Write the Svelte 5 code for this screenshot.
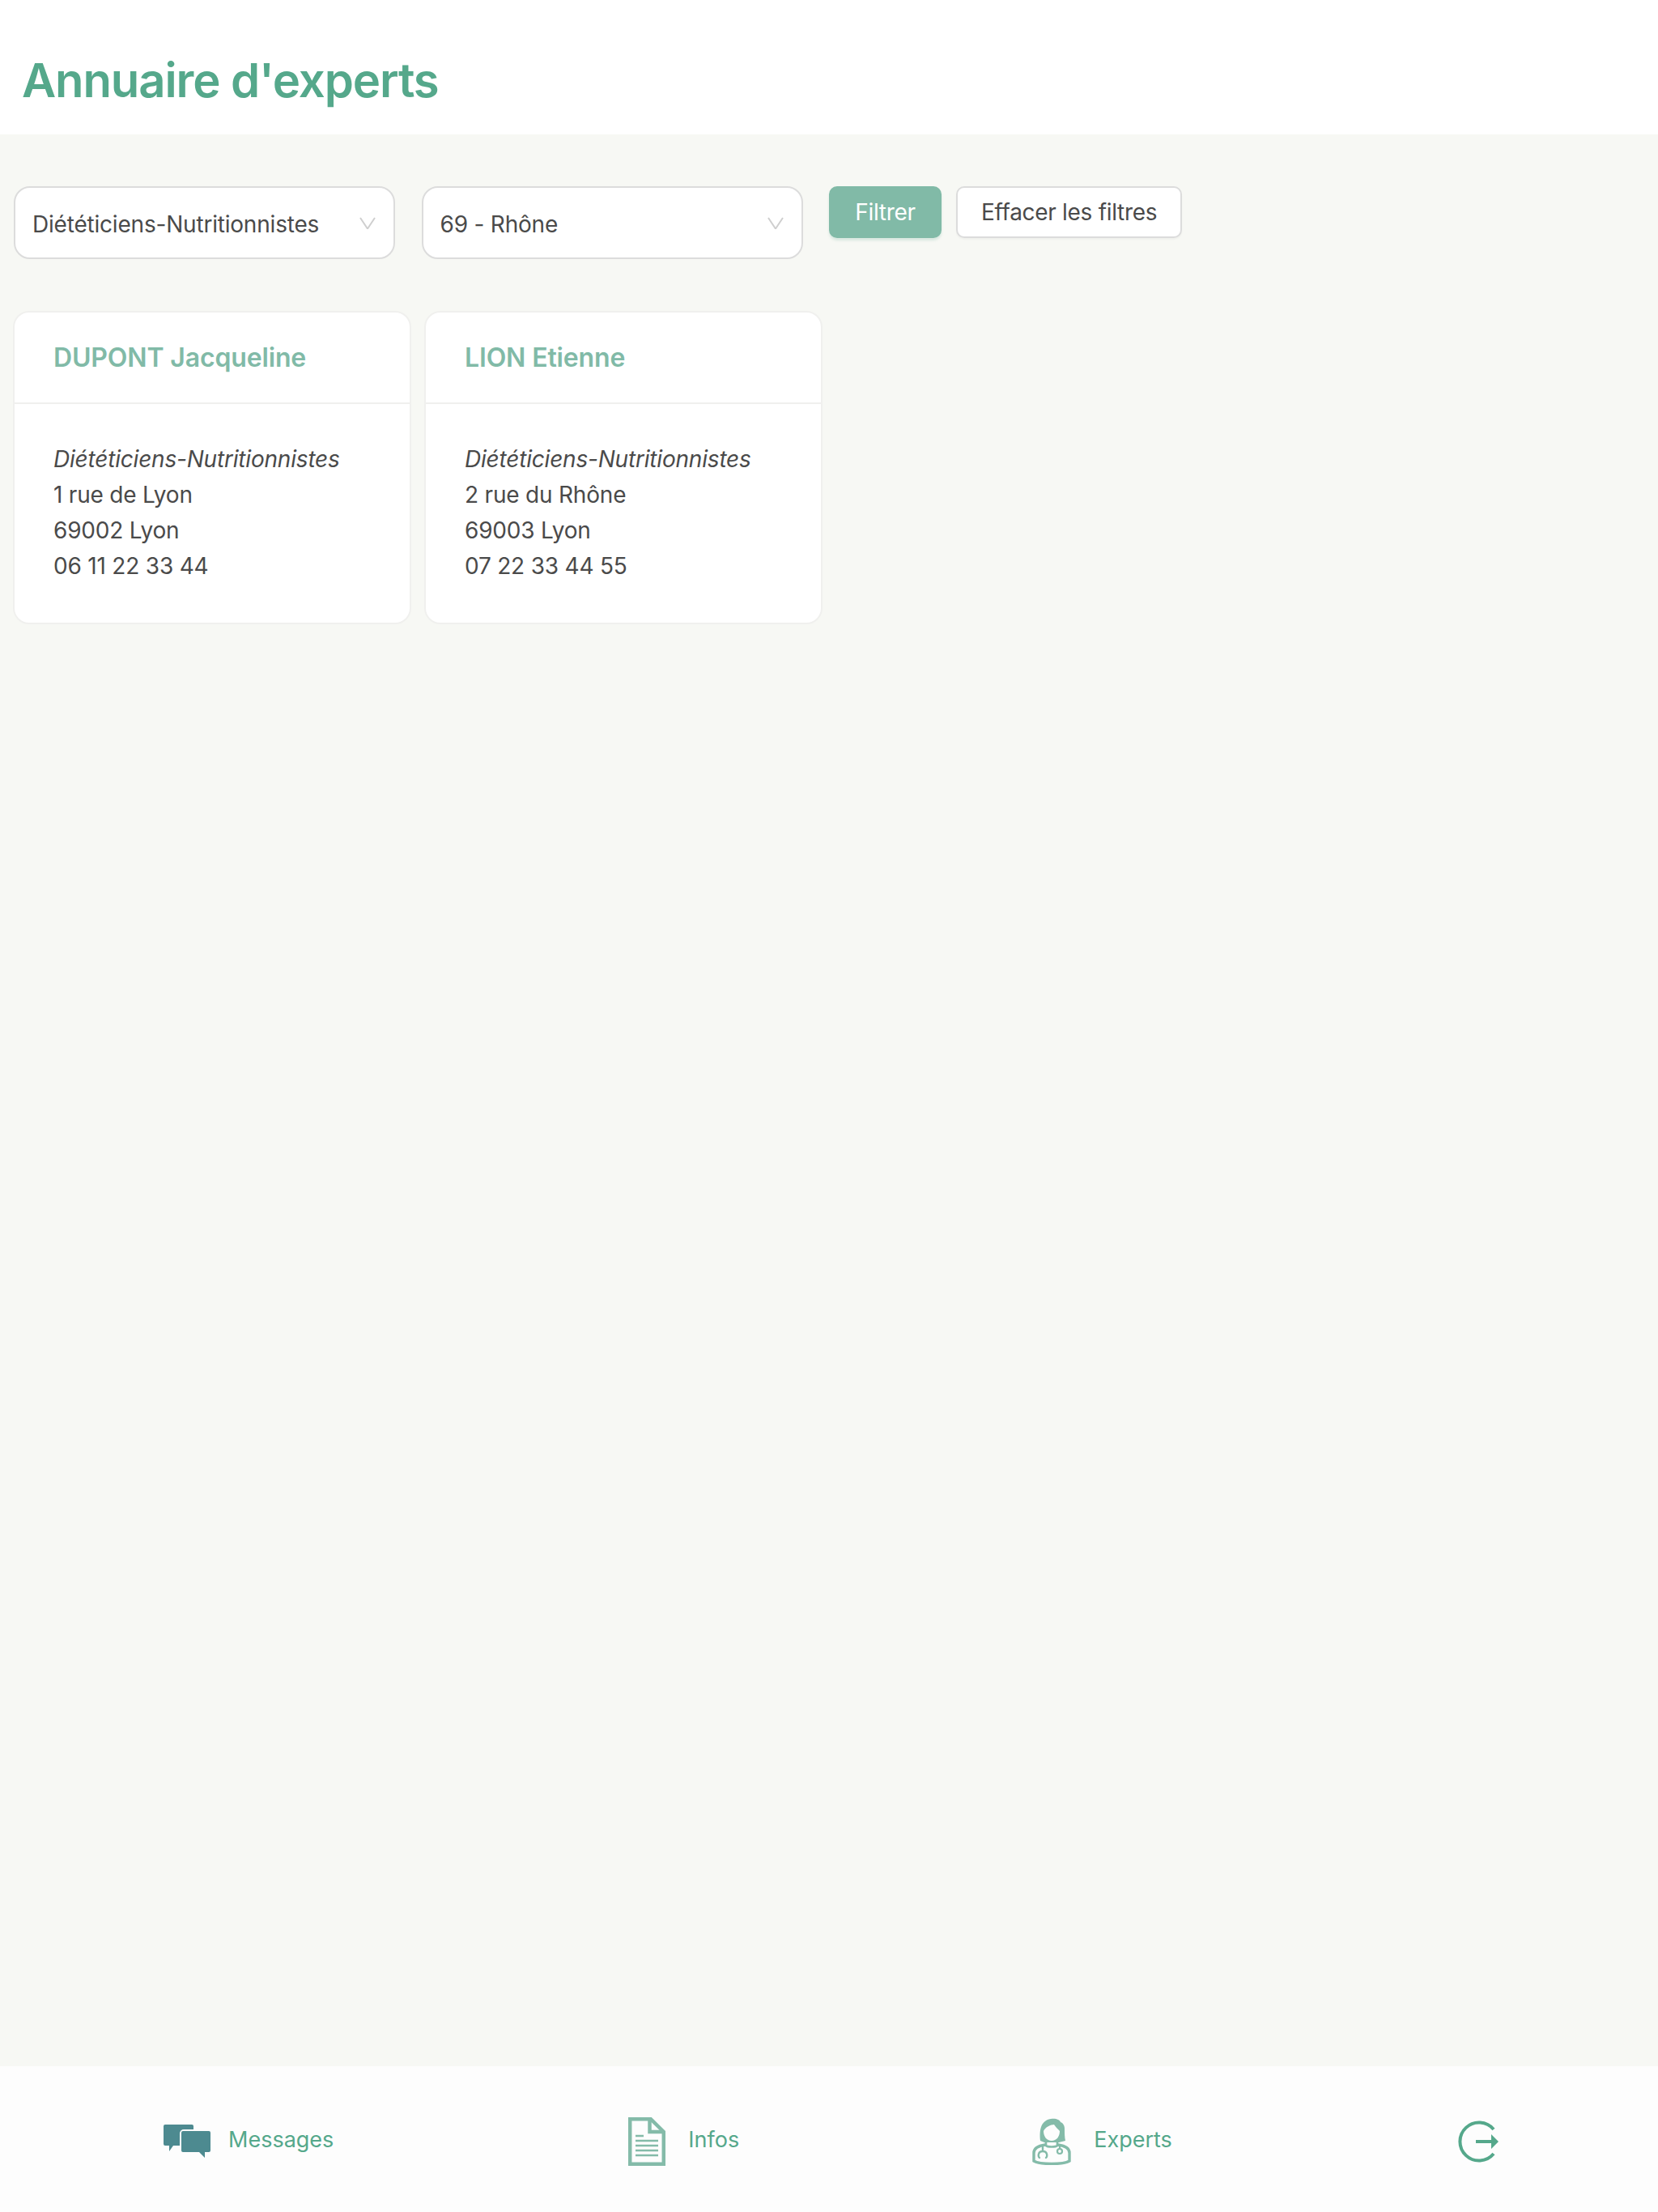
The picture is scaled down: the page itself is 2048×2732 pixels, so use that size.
<script>
	const experts = [
		{ name: 'DUPONT Jacqueline', job: 'Diététiciens-Nutritionnistes', street: '1 rue de Lyon', city: '69002 Lyon', phone: '06 11 22 33 44' },
		{ name: 'LION Etienne', job: 'Diététiciens-Nutritionnistes', street: '2 rue du Rhône', city: '69003 Lyon', phone: '07 22 33 44 55' }
	];
</script>

<div class="page">
	<header class="top">
		<h1>Annuaire d'experts</h1>
	</header>

	<main>
		<form class="filters" onsubmit={(e) => e.preventDefault()}>
			<div class="field">
				<select>
					<option>Diététiciens-Nutritionnistes</option>
				</select>
				<svg class="chev" viewBox="0 0 20 15"><path d="M1 1l9 13.5L19 1" /></svg>
			</div>
			<div class="field">
				<select>
					<option>69 - Rhône</option>
				</select>
				<svg class="chev" viewBox="0 0 20 15"><path d="M1 1l9 13.5L19 1" /></svg>
			</div>
			<button class="btn primary">Filtrer</button>
			<button class="btn" type="button">Effacer les filtres</button>
		</form>

		<section class="cards">
			{#each experts as ex}
				<article class="card">
					<h2>{ex.name}</h2>
					<div class="body">
						<em>{ex.job}</em>
						<span>{ex.street}</span>
						<span>{ex.city}</span>
						<span>{ex.phone}</span>
					</div>
				</article>
			{/each}
		</section>
	</main>

	<nav class="tabs">
		<a href="#messages" class="tab first">
			<svg width="62" height="45" viewBox="0 0 62 45">
				<path fill="#4d8a90" d="M4 2h33a2 2 0 0 1 2 2v24H14l-5 7v-7H4a2 2 0 0 1-2-2V4a2 2 0 0 1 2-2z" />
				<rect x="22" y="8" width="40" height="30" rx="5" fill="#fdfdfd" />
				<path fill="#4d8a90" d="M26 10h32a2 2 0 0 1 2 2v22a2 2 0 0 1-2 2h-5v7l-7-7H26a2 2 0 0 1-2-2V12a2 2 0 0 1 2-2z" />
			</svg>
			<span>Messages</span>
		</a>
		<a href="#infos" class="tab">
			<svg width="46" height="60" viewBox="0 0 46 60" fill="none" stroke="#84bba9">
				<path stroke-width="4.5" d="M2.2 2.2h25.6L43.8 18v39.8H2.2z" />
				<path stroke-width="4.5" d="M26.5 2.5V18h17" />
				<path stroke-width="2.4" d="M9 23h10M9 29h28M9 35h28M9 41h28M9 47h28" />
			</svg>
			<span>Infos</span>
		</a>
		<a href="#experts" class="tab experts">
			<svg width="48" height="58" viewBox="0 0 48 58">
				<path fill="#84bba9" d="M10 28C9 18 9 3 23 1c6-1 11 1 12 4 3 1 5 4 5 8 0 6 0 11 1 15l-8 2H15z" />
				<path fill="#fdfdfd" d="M14 16C16 11 23 8 27 8c2 3 5 6 7 8 0 7-4 12-10 12s-10-5-10-12z" />
				<path fill="none" stroke="#84bba9" stroke-width="3.4" stroke-linecap="round" d="M16 33c-7 1-14 4-14 10v10c5 3 13 3.5 22 3.5s17-.5 22-3.5V43c0-6-7-9-14-10" />
				<path fill="none" stroke="#84bba9" stroke-width="2.6" d="M17 29v5c2 2 12 2 14 0v-5" />
				<path fill="none" stroke="#84bba9" stroke-width="2.4" stroke-linecap="round" d="M13 36v5M9 49c-2-2-2-8 4-8s6 6 4 8" />
				<circle cx="34" cy="41" r="3" fill="none" stroke="#84bba9" stroke-width="2.2" />
				<path fill="none" stroke="#84bba9" stroke-width="2.2" d="M34 35v3" />
			</svg>
			<span>Experts</span>
		</a>
		<a href="#logout" class="tab last" aria-label="Déconnexion">
			<svg width="54" height="52" viewBox="0 0 54 52">
				<path fill="none" stroke="#55a88b" stroke-width="4" d="M47 7.5A23.5 23.5 0 1 0 47 37.5" transform="translate(0 3.5)" />
				<path fill="#55a88b" d="M25 24h19v-7l9 9-9 9v-7H25z" />
			</svg>
		</a>
	</nav>
</div>

<style>
	:global(body) {
		margin: 0;
		font-family: Inter, 'Liberation Sans', sans-serif;
		color: #4a4a4a;
	}

	.page {
		display: flex;
		flex-direction: column;
		min-height: 2732px;
		background: #f7f8f4;
	}

	.top {
		height: 166px;
		box-sizing: border-box;
		padding: 65px 27px 0;
		background: #fff;
	}

	h1 {
		margin: 0;
		font-size: 58px;
		line-height: 68px;
		font-weight: 600;
		letter-spacing: -1.1px;
		color: #55a88b;
	}

	main {
		flex: 1;
		padding: 64px 17px 0;
	}

	.filters {
		display: flex;
		align-items: flex-start;
		gap: 18px;
	}

	.field {
		position: relative;
		margin-right: 14.5px;
	}

	select {
		display: block;
		appearance: none;
		box-sizing: border-box;
		width: 471px;
		height: 90px;
		padding: 4px 60px 0 21px;
		border: 2px solid #dcdcdc;
		border-radius: 20px;
		background: #fff;
		font: inherit;
		font-size: 28px;
		letter-spacing: -0.2px;
		color: #4a4a4a;
		outline: none;
	}

	.chev {
		position: absolute;
		top: 38px;
		right: 24px;
		width: 20px;
		height: 15px;
		fill: none;
		stroke: #cfcfcf;
		stroke-width: 2;
		pointer-events: none;
	}

	.btn {
		box-sizing: border-box;
		height: 64px;
		padding: 0 29px;
		border: 2px solid #dcdcdc;
		border-radius: 10px;
		background: #fff;
		font: inherit;
		font-size: 28px;
		letter-spacing: -0.3px;
		color: #4a4a4a;
		box-shadow: 0 2px 2px rgba(0, 0, 0, 0.03);
	}

	.btn.primary {
		width: 139px;
		padding: 0;
		border-color: #81baa7;
		background: #81baa7;
		color: #fff;
		box-shadow: 0 3px 3px rgba(129, 186, 167, 0.25);
	}

	.cards {
		display: flex;
		gap: 16px;
		margin: 64px 0 0 -1px;
	}

	.card {
		box-sizing: border-box;
		width: 492px;
		height: 387px;
		border: 2px solid #f0f0ee;
		border-radius: 20px;
		background: #fff;
	}

	h2 {
		margin: 0;
		box-sizing: border-box;
		height: 113px;
		padding: 36px 48px 0;
		border-bottom: 2px solid #f0f0ee;
		font-size: 32px;
		line-height: 40px;
		font-weight: 600;
		letter-spacing: -0.15px;
		color: #81baa7;
	}

	.body {
		display: flex;
		flex-direction: column;
		padding: 46px 48px 0;
		font-size: 28px;
		line-height: 44px;
		letter-spacing: -0.2px;
	}

	.tabs {
		display: flex;
		align-items: center;
		gap: 364px;
		height: 180px;
		padding: 0 0 0 200px;
		background: #fdfdfd;
	}

	.tab {
		display: flex;
		align-items: center;
		gap: 28px;
		font-size: 27px;
		color: #55a88b;
		text-decoration: none;
	}

	.tab svg {
		margin-top: 5px;
	}

	.first {
		gap: 20px;
	}

	.experts {
		margin-left: -2px;
	}

	.last {
		margin-left: -14px;
	}
</style>
